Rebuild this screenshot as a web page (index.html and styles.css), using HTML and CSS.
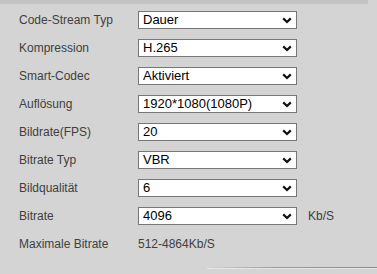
FILE: index.html
```html
<!DOCTYPE html>
<html lang="de">
<head>
    <meta charset="UTF-8">
    <meta name="viewport" content="width=device-width, initial-scale=1.0">
    <title>Video</title>
    <link rel="stylesheet" href="styles.css">
</head>
<body>

<div class="top-strip"></div>

<!-- Encode settings -->
<form class="settings">
    <div class="row">
        <label class="label">Code-Stream Typ</label>
        <select class="field"><option>Dauer</option></select>
    </div>
    <div class="row">
        <label class="label">Kompression</label>
        <select class="field"><option>H.265</option></select>
    </div>
    <div class="row">
        <label class="label">Smart-Codec</label>
        <select class="field"><option>Aktiviert</option></select>
    </div>
    <div class="row">
        <label class="label">Auflösung</label>
        <select class="field"><option>1920*1080(1080P)</option></select>
    </div>
    <div class="row">
        <label class="label">Bildrate(FPS)</label>
        <select class="field"><option>20</option></select>
    </div>
    <div class="row">
        <label class="label">Bitrate Typ</label>
        <select class="field"><option>VBR</option></select>
    </div>
    <div class="row">
        <label class="label">Bildqualität</label>
        <select class="field"><option>6</option></select>
    </div>
    <div class="row">
        <label class="label">Bitrate</label>
        <select class="field"><option>4096</option></select>
        <span class="unit">Kb/S</span>
    </div>
    <div class="row">
        <label class="label">Maximale Bitrate</label>
        <span class="value">512-4864Kb/S</span>
    </div>
</form>

<div class="divider"></div>

</body>
</html>
```

FILE: styles.css
```css
body {
    font-family: "Liberation Sans", Arial, sans-serif;
    margin: 0;
    padding: 0;
    background-color: #d4d4d4;
    height: 274px;
    overflow: hidden;
}
.top-strip {
    width: 368px;
    height: 4px;
    background-color: #c4c4c4;
}
.settings {
    display: flex;
    flex-direction: column;
    gap: 10px;
    padding: 7px 0 0 19px;
    margin: 0;
}
.row {
    display: flex;
    align-items: center;
    height: 18px;
}
.label {
    width: 119px;
    font-size: 12px;
    color: #404040;
}
.field {
    appearance: none;
    -webkit-appearance: none;
    box-sizing: border-box;
    width: 159px;
    height: 18px;
    margin: 0;
    padding: 0 0 0 4px;
    border: 1px solid #767676;
    border-radius: 0;
    background-color: #fff;
    background-image: url("data:image/svg+xml,%3Csvg xmlns='http://www.w3.org/2000/svg' width='10' height='7' viewBox='0 0 10 7'%3E%3Cpath d='M1.2 1.4 L5 5 L8.8 1.4' fill='none' stroke='%23111' stroke-width='2.2'/%3E%3C/svg%3E");
    background-repeat: no-repeat;
    background-position: right 4px center;
    font-family: "Liberation Sans", Arial, sans-serif;
    font-size: 13px;
    line-height: 16px;
    color: #000;
}
.unit {
    margin-left: 11px;
    font-size: 12px;
    color: #404040;
}
.value {
    font-size: 12px;
    color: #404040;
}
.divider {
    margin: 14px 0 0 207px;
    height: 1px;
    background: linear-gradient(to right, rgba(150, 150, 150, 0), #9a9a9a 40%, #8c8c8c);
    border-bottom: 1px solid #e6e6e6;
}
```
